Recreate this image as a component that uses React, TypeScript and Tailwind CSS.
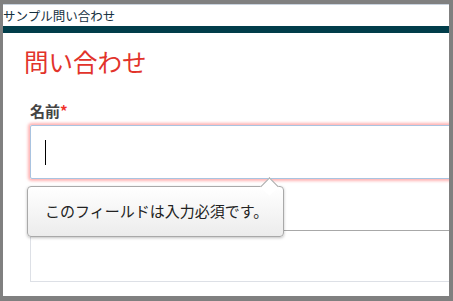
import React from 'react';

const font = { fontFamily: '"Noto Sans CJK JP", "Noto Sans", sans-serif' };

export default function App() {
  return (
    <div className="h-[301px] w-[453px] bg-[#808080] pt-[4px] pl-[3px] pr-[4px] pb-[5px]" style={font}>
      <div className="relative h-full overflow-hidden border-t border-[#c9d3de] bg-white">
        <div className="h-[21px] text-[12.5px] leading-[21px] text-[#15303f]">サンプル問い合わせ</div>
        <div className="h-[7px] bg-[#013d4a]" />

        <h1 className="mt-[14px] pl-[21px] text-[24.5px] font-normal leading-[30px] text-[#e2332b]">問い合わせ</h1>

        <div className="pl-[27px]">
          <label className="mt-[24px] block text-[15px] font-bold leading-[20px] text-[#444]">
            名前<span className="text-[#f0302a]">*</span>
          </label>

          <div className="mt-[4px] flex h-[54px] w-[440px] items-center rounded-[2px] border border-[#a9c3e0] pl-[14px] shadow-[0_0_3px_2px_rgba(255,130,130,0.6)]">
            <span className="block h-[25px] w-px bg-black" />
          </div>

          <div className="mt-[51px] h-[52px] w-[440px] border border-[#dde0e6] border-t-[#a8a8a8]" />
        </div>

        {/* validation bubble */}
        <div className="absolute left-[24px] top-[181px] h-[51px] w-[257px] rounded-[4px] border border-[#a9a9a9] bg-gradient-to-b from-white to-[#ececec] shadow-[0_1px_3px_rgba(0,0,0,0.25)]">
          <div className="absolute left-[235px] top-[-7px] h-[13px] w-[13px] rotate-45 border-l border-t border-[#a9a9a9] bg-white" />
          <div className="flex h-full items-center pl-[17px] text-[15px] text-[#222]">このフィールドは入力必須です。</div>
        </div>
      </div>
    </div>
  );
}
